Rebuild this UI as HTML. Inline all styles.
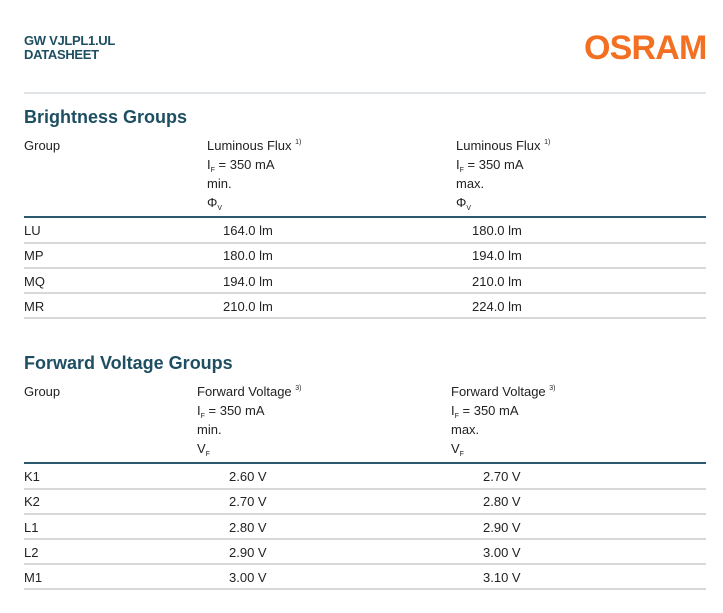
<!DOCTYPE html>
<html><head><style>
body{margin:0;width:723px;height:613px;background:#fff;position:relative;font-family:"Liberation Sans",sans-serif;color:#222;overflow:hidden}
.a{position:absolute;white-space:nowrap;font-size:13px;line-height:15px}
.h{position:absolute;font-weight:bold;color:#1e4e62;font-size:18px}
.ln{position:absolute;left:24px;width:682px;height:2px;background:#d8d8d8}
.tk{position:absolute;left:24px;width:682px;height:2px;background:#2a5a6e}
sub{font-size:7px;vertical-align:baseline;position:relative;top:3px;line-height:0}
sup{font-size:7px;vertical-align:baseline;position:relative;top:-6px;line-height:0}
</style></head><body>
<div class="a" style="left:24px;top:34px;font-weight:bold;color:#1e4e62;font-size:13px;line-height:14px;letter-spacing:-0.3px">GW VJLPL1.UL<br>DATASHEET</div>
<div class="a" style="left:584px;top:29px;font-weight:bold;color:#f36f21;font-size:34px;line-height:38px;letter-spacing:-0.8px">OSRAM</div>
<div class="ln" style="top:92px;background:#e2e5e8"></div>

<div class="h" style="left:24px;top:107px">Brightness Groups</div>
<div class="a" style="left:24px;top:138px">Group</div>
<div class="a" style="left:207px;top:136px;line-height:19px">Luminous Flux <sup>1)</sup><br>I<sub>F</sub> = 350 mA<br>min.<br>Φ<sub>V</sub></div>
<div class="a" style="left:456px;top:136px;line-height:19px">Luminous Flux <sup>1)</sup><br>I<sub>F</sub> = 350 mA<br>max.<br>Φ<sub>V</sub></div>
<div class="tk" style="top:216px"></div>
<div class="a" style="left:24px;top:223px">LU</div><div class="a" style="left:223px;top:223px">164.0 lm</div><div class="a" style="left:472px;top:223px">180.0 lm</div>
<div class="ln" style="top:242px"></div>
<div class="a" style="left:24px;top:248px">MP</div><div class="a" style="left:223px;top:248px">180.0 lm</div><div class="a" style="left:472px;top:248px">194.0 lm</div>
<div class="ln" style="top:267px"></div>
<div class="a" style="left:24px;top:274px">MQ</div><div class="a" style="left:223px;top:274px">194.0 lm</div><div class="a" style="left:472px;top:274px">210.0 lm</div>
<div class="ln" style="top:292px"></div>
<div class="a" style="left:24px;top:299px">MR</div><div class="a" style="left:223px;top:299px">210.0 lm</div><div class="a" style="left:472px;top:299px">224.0 lm</div>
<div class="ln" style="top:317px"></div>

<div class="h" style="left:24px;top:353px">Forward Voltage Groups</div>
<div class="a" style="left:24px;top:384px">Group</div>
<div class="a" style="left:197px;top:382px;line-height:19px">Forward Voltage <sup>3)</sup><br>I<sub>F</sub> = 350 mA<br>min.<br>V<sub>F</sub></div>
<div class="a" style="left:451px;top:382px;line-height:19px">Forward Voltage <sup>3)</sup><br>I<sub>F</sub> = 350 mA<br>max.<br>V<sub>F</sub></div>
<div class="tk" style="top:462px"></div>
<div class="a" style="left:24px;top:469px">K1</div><div class="a" style="left:229px;top:469px">2.60 V</div><div class="a" style="left:483px;top:469px">2.70 V</div>
<div class="ln" style="top:488px"></div>
<div class="a" style="left:24px;top:494px">K2</div><div class="a" style="left:229px;top:494px">2.70 V</div><div class="a" style="left:483px;top:494px">2.80 V</div>
<div class="ln" style="top:513px"></div>
<div class="a" style="left:24px;top:520px">L1</div><div class="a" style="left:229px;top:520px">2.80 V</div><div class="a" style="left:483px;top:520px">2.90 V</div>
<div class="ln" style="top:538px"></div>
<div class="a" style="left:24px;top:545px">L2</div><div class="a" style="left:229px;top:545px">2.90 V</div><div class="a" style="left:483px;top:545px">3.00 V</div>
<div class="ln" style="top:563px"></div>
<div class="a" style="left:24px;top:570px">M1</div><div class="a" style="left:229px;top:570px">3.00 V</div><div class="a" style="left:483px;top:570px">3.10 V</div>
<div class="ln" style="top:588px"></div>
</body></html>
